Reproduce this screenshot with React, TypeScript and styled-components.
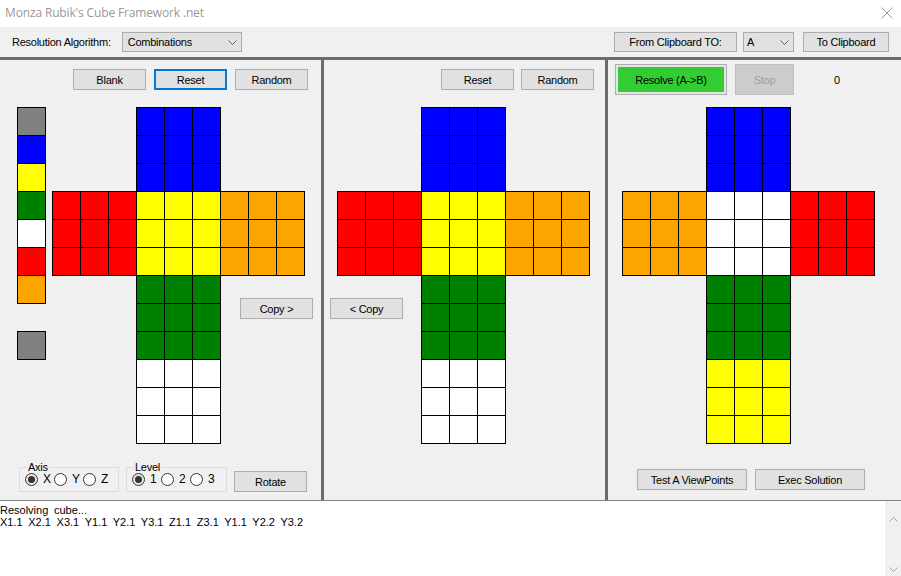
import React from 'react'
import styled, { createGlobalStyle, css } from 'styled-components'

const GlobalStyle = createGlobalStyle`
  html, body {
    margin: 0;
    padding: 0;
  }
  body {
    background: #f0f0f0;
    font-family: 'Liberation Sans', Arial, sans-serif;
    font-size: 11px;
    color: #000;
    overflow: hidden;
  }
  * {
    box-sizing: border-box;
  }
`

const COLORS: Record<string, string> = {
  B: '#0000ff',
  Y: '#ffff00',
  G: '#008000',
  W: '#ffffff',
  R: '#ff0000',
  O: '#ffa500',
  X: '#808080'
}

const Window = styled.div`
  width: 901px;
  height: 576px;
  display: flex;
  flex-direction: column;
  background: #f0f0f0;
`

// Title bar
const TitleBar = styled.div`
  height: 27px;
  flex: none;
  background: #fff;
  display: flex;
  align-items: center;
  justify-content: space-between;
  padding: 0 8px 2px 5px;
`

const Title = styled.span`
  font-family: 'Open Sans', 'Noto Sans', sans-serif;
  font-size: 12px;
  letter-spacing: -0.15px;
  color: #999;
`

// Toolbar
const Toolbar = styled.div`
  height: 30px;
  flex: none;
  display: flex;
  align-items: center;
  padding: 0 12px;
  letter-spacing: -0.25px;
`

const ToolLabel = styled.span`
  margin-right: 11px;
`

const ToolGroup = styled.div`
  margin-left: auto;
  display: flex;
  align-items: center;
`

const Combo = styled.div<{ $width: number; $pad: number }>`
  width: ${({ $width }) => $width}px;
  height: 20px;
  background: #e1e1e1;
  border: 1px solid #adadad;
  display: flex;
  align-items: center;
  justify-content: space-between;
  padding: 0 4px 0 ${({ $pad }) => $pad}px;
`

const Button = styled.button<{ $width: number; $height?: number; $focused?: boolean }>`
  width: ${({ $width }) => $width}px;
  height: ${({ $height }) => $height || 21}px;
  flex: none;
  padding: 0;
  background: #e1e1e1;
  border: 1px solid #adadad;
  font-family: 'Liberation Sans', Arial, sans-serif;
  font-size: 11px;
  letter-spacing: -0.25px;
  color: #000;
  ${({ $focused }) =>
    $focused &&
    css`
      border: 2px solid #0078d7;
    `}
`

const ResolveButton = styled(Button)`
  background: #32cd32;
  box-shadow: inset 0 0 0 2px #e5e5e5;
`

const StopButton = styled(Button)`
  background: #cccccc;
  border-color: #bfbfbf;
  color: #a0a0a0;
  margin-left: 8px;
`

// Panels
const PanelRow = styled.div`
  flex: none;
  height: 443px;
  border-top: 3px solid #6b6b6b;
  display: grid;
  grid-template-columns: 321px 284px 1fr;
`

const Panel = styled.div<{ $divider?: boolean }>`
  display: flex;
  flex-direction: column;
  min-height: 0;
  ${({ $divider }) =>
    $divider &&
    css`
      border-left: 3px solid #6b6b6b;
    `}
`

const ButtonRow = styled.div<{ $align: 'start' | 'end'; $gap: number; $pad: number }>`
  display: flex;
  justify-content: ${({ $align }) => ($align === 'start' ? 'flex-start' : 'flex-end')};
  gap: ${({ $gap }) => $gap}px;
  padding-top: 9px;
  padding-left: ${({ $align, $pad }) => ($align === 'start' ? $pad : 0)}px;
  padding-right: ${({ $align, $pad }) => ($align === 'end' ? $pad : 0)}px;
`

const ResolveRow = styled.div`
  display: flex;
  align-items: center;
  padding: 4px 0 0 7px;
`

const Counter = styled.span`
  margin-left: 40px;
`

const Body = styled.div<{ $top: number; $left: number }>`
  display: flex;
  align-items: flex-start;
  gap: 6px;
  margin-top: ${({ $top }) => $top}px;
  padding-left: ${({ $left }) => $left}px;
`

const Palette = styled.div`
  display: grid;
  grid-template-columns: 28px;
  grid-template-rows: repeat(9, 28px);
  width: 29px;
  height: 253px;
`

const NetGrid = styled.div`
  display: grid;
  grid-template-columns: repeat(3, 84px);
  grid-template-rows: repeat(4, 84px);
  width: 253px;
  height: 337px;
`

const FaceGrid = styled.div<{ $col: number; $row: number }>`
  grid-column: ${({ $col }) => $col};
  grid-row: ${({ $row }) => $row};
  display: grid;
  grid-template-columns: repeat(3, 28px);
  grid-template-rows: repeat(3, 28px);
`

const Sticker = styled.div<{ $color: string; $row?: number }>`
  width: 29px;
  height: 29px;
  border: 1px solid #000;
  background: ${({ $color }) => $color};
  ${({ $row }) =>
    $row &&
    css`
      grid-row: ${$row};
    `}
`

const CopyButton = styled(Button)<{ $col: number; $shift: number }>`
  grid-column: ${({ $col }) => $col};
  grid-row: 3;
  align-self: start;
  justify-self: start;
  margin-top: 23px;
  margin-left: ${({ $shift }) => $shift}px;
`

const BottomRow = styled.div<{ $pad: number; $bottom: number; $gap: number }>`
  margin-top: auto;
  display: flex;
  align-items: flex-end;
  gap: ${({ $gap }) => $gap}px;
  padding: 0 0 ${({ $bottom }) => $bottom}px ${({ $pad }) => $pad}px;
`

const Group = styled.fieldset<{ $width: number }>`
  width: ${({ $width }) => $width}px;
  margin: 0;
  padding: 0 0 6px 5px;
  border: 1px solid #dcdcdc;
  display: flex;
  min-width: 0;
`

const GroupLegend = styled.legend`
  padding: 0 1px;
  margin-left: 2px;
  line-height: 12px;
  letter-spacing: -0.25px;
`

const RadioItem = styled.label`
  width: 29px;
  height: 12px;
  display: flex;
  align-items: center;
  gap: 5px;
  font-size: 12px;
`

const RadioDot = styled.span<{ $checked?: boolean }>`
  width: 13px;
  height: 13px;
  flex: none;
  border-radius: 50%;
  border: 1px solid #333;
  background: #fff;
  display: inline-flex;
  align-items: center;
  justify-content: center;
  ${({ $checked }) =>
    $checked &&
    css`
      background: #e6e6e6;
      &::after {
        content: '';
        width: 7px;
        height: 7px;
        border-radius: 50%;
        background: #333;
      }
    `}
`

// Log area
const LogArea = styled.div`
  flex: 1;
  display: flex;
  background: #fff;
  border-top: 1px solid #828282;
`

const LogText = styled.div`
  flex: 1;
  padding: 3px 0 0 0;
  line-height: 12px;
  font-size: 11px;
  word-spacing: 2.6px;
`

const ScrollBar = styled.div`
  width: 16px;
  background: #f0f0f0;
  display: flex;
  flex-direction: column;
  justify-content: space-between;
  align-items: center;
  padding: 16px 0 4px;
`

const Chevron = ({ up, color = '#a3a3a3', width = 9 }: { up?: boolean; color?: string; width?: number }) => (
  <svg width={width} height={5} viewBox="0 0 9 5">
    <polyline
      points={up ? '0.5,4.5 4.5,0.5 8.5,4.5' : '0.5,0.5 4.5,4.5 8.5,0.5'}
      fill="none"
      stroke={color}
      strokeWidth="1"
    />
  </svg>
)

type FaceSpec = { color: string; col: number; row: number }

function Face({ color, col, row }: FaceSpec) {
  return (
    <FaceGrid $col={col} $row={row}>
      {Array.from({ length: 9 }).map((_, i) => (
        <Sticker key={i} $color={COLORS[color]} />
      ))}
    </FaceGrid>
  )
}

function Net({ faces, children }: { faces: FaceSpec[]; children?: React.ReactNode }) {
  return (
    <NetGrid>
      {faces.map(f => (
        <Face key={`${f.col}-${f.row}`} {...f} />
      ))}
      {children}
    </NetGrid>
  )
}

const solvedFaces: FaceSpec[] = [
  { color: 'B', col: 2, row: 1 },
  { color: 'R', col: 1, row: 2 },
  { color: 'Y', col: 2, row: 2 },
  { color: 'O', col: 3, row: 2 },
  { color: 'G', col: 2, row: 3 },
  { color: 'W', col: 2, row: 4 }
]

const targetFaces: FaceSpec[] = [
  { color: 'B', col: 2, row: 1 },
  { color: 'O', col: 1, row: 2 },
  { color: 'W', col: 2, row: 2 },
  { color: 'R', col: 3, row: 2 },
  { color: 'G', col: 2, row: 3 },
  { color: 'Y', col: 2, row: 4 }
]

const paletteColors = ['X', 'B', 'Y', 'G', 'W', 'R', 'O']

export default function App() {
  return (
    <Window>
      <GlobalStyle />
      <TitleBar>
        <Title>Monza Rubik's Cube Framework .net</Title>
        <svg width="12" height="12" viewBox="0 0 12 12">
          <path d="M0.5 0.5 L11.5 11.5 M11.5 0.5 L0.5 11.5" stroke="#999" strokeWidth="1" fill="none" />
        </svg>
      </TitleBar>

      <Toolbar>
        <ToolLabel>Resolution Algorithm:</ToolLabel>
        <Combo $width={120} $pad={5}>
          <span>Combinations</span>
          <Chevron color="#666" width={9} />
        </Combo>
        <ToolGroup>
          <Button $width={123} $height={20}>From Clipboard TO:</Button>
          <Combo $width={51} $pad={3} style={{ marginLeft: 6 }}>
            <span>A</span>
            <Chevron color="#666" width={9} />
          </Combo>
          <Button $width={86} $height={20} style={{ marginLeft: 9 }}>
            To Clipboard
          </Button>
        </ToolGroup>
      </Toolbar>

      <PanelRow>
        <Panel>
          <ButtonRow $align="start" $gap={8} $pad={73}>
            <Button $width={73}>Blank</Button>
            <Button $width={73} $focused>
              Reset
            </Button>
            <Button $width={73}>Random</Button>
          </ButtonRow>
          <Body $top={17} $left={17}>
            <Palette>
              {paletteColors.map(c => (
                <Sticker key={c} $color={COLORS[c]} />
              ))}
              <Sticker $color={COLORS.X} $row={9} />
            </Palette>
            <Net faces={solvedFaces}>
              <CopyButton $width={73} $col={3} $shift={20}>
                Copy &gt;
              </CopyButton>
            </Net>
          </Body>
          <BottomRow $pad={19} $bottom={8} $gap={7}>
            <Group $width={100}>
              <GroupLegend>Axis</GroupLegend>
              {['X', 'Y', 'Z'].map((a, i) => (
                <RadioItem key={a}>
                  <RadioDot $checked={i === 0} />
                  {a}
                </RadioItem>
              ))}
            </Group>
            <Group $width={101}>
              <GroupLegend>Level</GroupLegend>
              {['1', '2', '3'].map((a, i) => (
                <RadioItem key={a}>
                  <RadioDot $checked={i === 0} />
                  {a}
                </RadioItem>
              ))}
            </Group>
            <Button $width={73}>Rotate</Button>
          </BottomRow>
        </Panel>

        <Panel $divider>
          <ButtonRow $align="end" $gap={7} $pad={11}>
            <Button $width={73}>Reset</Button>
            <Button $width={73}>Random</Button>
          </ButtonRow>
          <Body $top={17} $left={13}>
            <Net faces={solvedFaces}>
              <CopyButton $width={73} $col={1} $shift={-7}>
                &lt; Copy
              </CopyButton>
            </Net>
          </Body>
        </Panel>

        <Panel $divider>
          <ResolveRow>
            <ResolveButton $width={112} $height={31}>
              Resolve (A-&gt;B)
            </ResolveButton>
            <StopButton $width={59} $height={31}>
              Stop
            </StopButton>
            <Counter>0</Counter>
          </ResolveRow>
          <Body $top={12} $left={14}>
            <Net faces={targetFaces} />
          </Body>
          <BottomRow $pad={29} $bottom={10} $gap={8}>
            <Button $width={110}>Test A ViewPoints</Button>
            <Button $width={110}>Exec Solution</Button>
          </BottomRow>
        </Panel>
      </PanelRow>

      <LogArea>
        <LogText>
          Resolving cube...
          <br />
          X1.1 X2.1 X3.1 Y1.1 Y2.1 Y3.1 Z1.1 Z3.1 Y1.1 Y2.2 Y3.2
        </LogText>
        <ScrollBar>
          <Chevron up />
          <Chevron />
        </ScrollBar>
      </LogArea>
    </Window>
  )
}
